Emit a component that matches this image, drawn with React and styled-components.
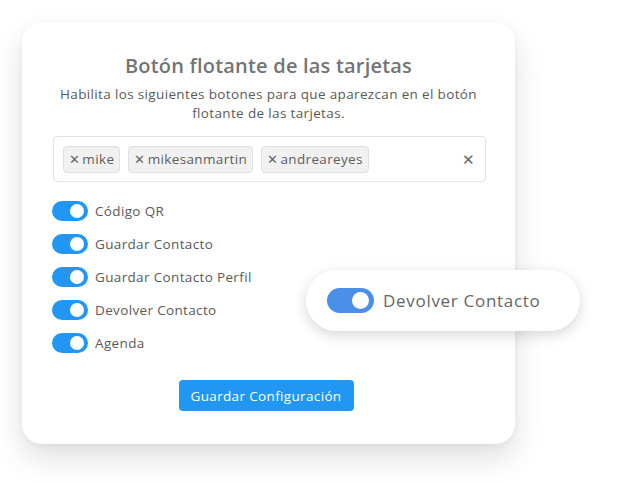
import styled, { createGlobalStyle } from "styled-components"

const GlobalStyle = createGlobalStyle`
    html, body {
        margin: 0;
        padding: 0;
        background: #ffffff;
    }
    body {
        font-family: "Open Sans", "Noto Sans", sans-serif;
        letter-spacing: 0.35px;
    }
    * {
        box-sizing: border-box;
    }
`

const Page = styled.div`
    position: relative;
    width: 636px;
    height: 483px;
    padding: 22px 0 0 22px;
    overflow: hidden;
`

const Card = styled.section`
    width: 493px;
    height: 422px;
    background: #ffffff;
    border-radius: 20px;
    box-shadow: 0 14px 30px rgba(0, 0, 0, 0.13), 0 2px 6px rgba(0, 0, 0, 0.04);
    padding: 30px 30px 0 30px;
    display: flex;
    flex-direction: column;
`

const Title = styled.h2`
    margin: 0;
    text-align: center;
    font-size: 20px;
    font-weight: 600;
    letter-spacing: 0.2px;
    color: #747474;
    line-height: 28px;
`

const Subtitle = styled.p`
    margin: 5px 0 0;
    text-align: center;
    font-size: 13.5px;
    line-height: 19px;
    color: #5a5a5a;
`

const TagBox = styled.div`
    margin: 13px 0 0 1px;
    width: 433px;
    height: 46px;
    border: 1px solid #e2e2e2;
    border-radius: 4px;
    display: flex;
    align-items: center;
    gap: 8px;
    padding: 0 9px;
`

const Tag = styled.span`
    display: inline-flex;
    align-items: center;
    gap: 2px;
    height: 27px;
    padding: 0 5px;
    background: #f1f1f1;
    border: 1px solid #e0e0e0;
    border-radius: 4px;
    font-size: 13.5px;
    color: #5e5e5e;
`

const TagX = styled.span`
    font-size: 13px;
    color: #666;
`

const ClearAll = styled.span`
    margin-left: auto;
    margin-right: 1px;
    font-size: 15px;
    color: #666;
`

const ToggleList = styled.ul`
    list-style: none;
    margin: 19px 0 0;
    padding: 0;
    display: flex;
    flex-direction: column;
    gap: 13px;
`

const ToggleRow = styled.li`
    display: flex;
    align-items: center;
    gap: 7px;
    height: 20px;
    font-size: 13.5px;
    color: #5a5a5a;
`

const Switch = styled.span`
    position: relative;
    flex: none;
    width: ${p => p.$w}px;
    height: ${p => p.$h}px;
    border-radius: ${p => p.$h / 2}px;
    background: ${p => p.$color};
    &::after {
        content: "";
        position: absolute;
        top: ${p => p.$pad}px;
        right: ${p => p.$pad + 1}px;
        width: ${p => p.$h - p.$pad * 2}px;
        height: ${p => p.$h - p.$pad * 2}px;
        border-radius: 50%;
        background: #ffffff;
    }
`

const SaveButton = styled.button`
    align-self: center;
    margin: 27px 0 0 -5px;
    width: 175px;
    height: 31px;
    border: 0;
    border-radius: 4px;
    background: #2196f3;
    color: #ffffff;
    font-family: inherit;
    letter-spacing: inherit;
    font-size: 13.5px;
`

const FloatPill = styled.div`
    position: absolute;
    left: 306px;
    top: 270px;
    width: 274px;
    height: 61px;
    border-radius: 31px;
    background: #ffffff;
    box-shadow: 0 4px 14px rgba(0, 0, 0, 0.16);
    display: flex;
    align-items: center;
    gap: 9px;
    padding-left: 21px;
    font-size: 17px;
    letter-spacing: 0.7px;
    color: #666666;
`

const options = ["Código QR", "Guardar Contacto", "Guardar Contacto Perfil", "Devolver Contacto", "Agenda"]
const tags = ["mike", "mikesanmartin", "andreareyes"]

export default function App() {
    return (
        <Page>
            <GlobalStyle />
            <Card>
                <Title>Botón flotante de las tarjetas</Title>
                <Subtitle>
                    Habilita los siguientes botones para que aparezcan en el botón
                    <br />
                    flotante de las tarjetas.
                </Subtitle>
                <TagBox>
                    {tags.map(t => (
                        <Tag key={t}>
                            <TagX>✕</TagX>
                            {t}
                        </Tag>
                    ))}
                    <ClearAll>✕</ClearAll>
                </TagBox>
                <ToggleList>
                    {options.map(o => (
                        <ToggleRow key={o}>
                            <Switch $w={36} $h={20} $pad={3} $color="#2196f3" />
                            {o}
                        </ToggleRow>
                    ))}
                </ToggleList>
                <SaveButton>Guardar Configuración</SaveButton>
            </Card>
            <FloatPill>
                <Switch $w={47} $h={25} $pad={4} $color="#4a90e8" />
                Devolver Contacto
            </FloatPill>
        </Page>
    )
}
